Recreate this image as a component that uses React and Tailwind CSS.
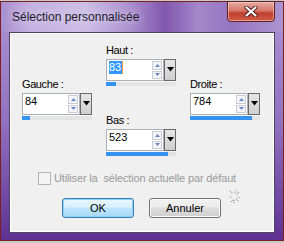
import React from "react";

function Spin({ value, fill, selected }) {
  return (
    <div className="w-[70px]">
      <div className="flex h-[22px]">
        <div className="flex-1 flex border border-[#a9b0b8] bg-white">
          <div className="flex-1 pl-[2px] pt-[1px] text-[11px] leading-[13px] text-black">
            {selected ? (
              <span className="inline-block bg-[#3399ff] text-white border-r border-[#ff9a3c] pr-[1px]">{value}</span>
            ) : (
              <span>{value}</span>
            )}
          </div>
          <div className="w-[11px] flex flex-col gap-[1px] py-[1px] pr-[1px]">
            <div className="h-[9px] border border-[#c8cdd6] bg-[#f2f4f8] flex items-center justify-center">
              <svg width="5" height="3" viewBox="0 0 5 3"><path d="M0 3 L2.5 0 L5 3 Z" fill="#6f86c4" /></svg>
            </div>
            <div className="h-[9px] border border-[#c8cdd6] bg-[#f2f4f8] flex items-center justify-center">
              <svg width="5" height="3" viewBox="0 0 5 3"><path d="M0 0 L2.5 3 L5 0 Z" fill="#6f86c4" /></svg>
            </div>
          </div>
        </div>
        <div className="w-[12px] border border-[#6a6a6a] bg-gradient-to-b from-[#e6e6e6] to-[#cfcfcf] flex justify-center pt-[7px]">
          <svg width="7" height="5" viewBox="0 0 7 5"><path d="M0 0 H7 L3.5 4.5 Z" fill="#000" /></svg>
        </div>
      </div>
      <div className="h-[5px] bg-[#e4e4e4] border-t border-[#f6f6f6]">
        <div className="h-full bg-[#3592f0]" style={{ width: fill }} />
      </div>
    </div>
  );
}

function Label({ children }) {
  return <div className="text-[11px] leading-[13px] mb-[2px] text-black tracking-[-0.4px]">{children}</div>;
}

export default function App() {
  return (
    <div className="w-[284px] h-[243px] bg-[#c9c9c9] pt-[1px] font-['Liberation_Sans',Arial,sans-serif]">
      <div className="relative h-[240px] border border-[#7c1f22] bg-gradient-to-b from-[#ad95d2] via-[#9172c0] to-[#5f3192] flex flex-col px-[8px] pb-[7px]">
        {/* title bar */}
        <div className="h-[30px] -mx-[8px] px-[8px] flex bg-[linear-gradient(90deg,#a78dcd_0%,#c4b1e0_10%,#cdbee6_30%,#ad93d0_45%,#8257ae_58%,#a487cb_70%,#9675c0_82%,#ad94d1_100%)]">
          <div className="flex-1 pl-[3px] pt-[8px] text-[12px] leading-[15px] text-[#1b1b2a] [text-shadow:0_0_8px_#ece4f6]">
            Sélection personnalisée
          </div>
          <div className="w-[48px] h-[21px] -mt-[1px] rounded-b-[4px] border border-[#5e2222] bg-[linear-gradient(180deg,#e6aca2_0%,#d6786a_45%,#c0402f_58%,#d05a45_100%)] flex items-center justify-center shadow-[inset_0_0_0_1px_rgba(255,215,205,0.55)]">
            <svg width="14" height="11" viewBox="0 0 14 11">
              <path d="M2.5 1.5 L11.5 9.5 M11.5 1.5 L2.5 9.5" stroke="#4a1a1a" strokeWidth="4" strokeLinecap="round" />
              <path d="M2.5 1.5 L11.5 9.5 M11.5 1.5 L2.5 9.5" stroke="#ffffff" strokeWidth="2.2" strokeLinecap="round" />
            </svg>
          </div>
        </div>
        {/* client */}
        <div className="flex-1 border border-[#4d4560] bg-[#f0f0f0] shadow-[inset_0_0_0_1px_#ffffff] p-[1px]">
          <div className="flex pl-[11px] gap-[14px]">
            <div className="pt-[44px]">
              <Label>Gauche :</Label>
              <Spin value="84" fill="8px" />
            </div>
            <div className="pt-[10px]">
              <Label>Haut :</Label>
              <Spin value="83" fill="10px" selected />
              <div className="h-[28px]" />
              <Label>Bas :</Label>
              <Spin value="523" fill="62px" />
            </div>
            <div className="pt-[44px]">
              <Label>Droite :</Label>
              <Spin value="784" fill="62px" />
            </div>
          </div>
          <div className="flex items-center mt-[16px] pl-[27px] h-[13px]">
            <div className="w-[13px] h-[13px] border border-[#b4b4b4] bg-[#f4f4f4]" />
            <div className="ml-[3px] text-[11px] leading-[13px] text-[#9a9a9a] whitespace-pre tracking-[-0.15px]">Utiliser la  sélection actuelle par défaut</div>
          </div>
          <div className="flex items-start mt-[13px] pl-[51px]">
            <div className="w-[72px] h-[20px] rounded-[3px] border border-[#3c7fb1] bg-[linear-gradient(180deg,#eaf6fd_0%,#d9f0fc_45%,#bee6fd_50%,#a7d9f5_100%)] shadow-[inset_0_0_0_1px_#8fd2f5] flex items-center justify-center text-[11px] text-black">
              OK
            </div>
            <div className="ml-[15px] w-[72px] h-[20px] rounded-[3px] border border-[#707070] bg-[linear-gradient(180deg,#f2f2f2_0%,#ebebeb_45%,#dddddd_50%,#cfcfcf_100%)] shadow-[inset_0_0_0_1px_#fbfbfb] flex items-center justify-center text-[11px] text-black">
              Annuler
            </div>
            <svg className="ml-[6px] -mt-[10px]" width="16" height="18" viewBox="0 0 16 18">
              <path d="M3 3 L6 6 M9 2 L8 6 M12 4 L9 7 M2 9 L6 9 M10 9 L14 10 M4 14 L7 11 M9 11 L12 14 M7 12 L7 16" stroke="#9a9a9a" strokeWidth="1.2" strokeDasharray="1 1" />
            </svg>
          </div>
        </div>
      </div>
    </div>
  );
}
